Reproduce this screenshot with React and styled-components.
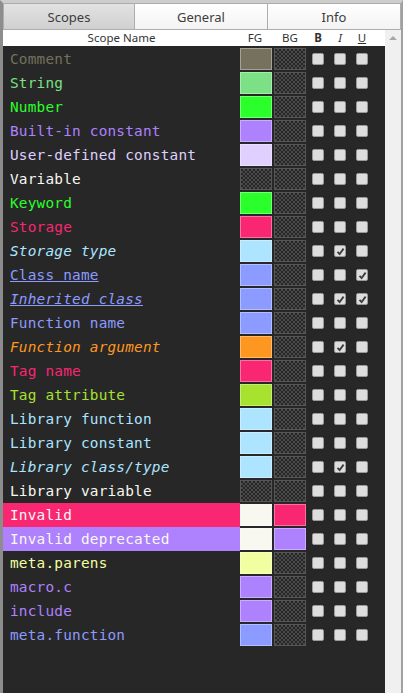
import React from 'react';
import styled, { createGlobalStyle } from 'styled-components';

const GlobalStyle = createGlobalStyle`
  html, body { margin: 0; padding: 0; background: #f0f0f0; }
  body { font-family: "Noto Sans", "Open Sans", sans-serif; }
`;

const Window = styled.div`
  width: 403px;
  height: 693px;
  box-sizing: border-box;
  border-top: 3px solid #cdcdcd;
  border-left: 3px solid #8d8d8d;
  border-right: 2px solid #a0a0a0;
  display: flex;
  flex-direction: column;
  background: #f0f0f0;
  overflow: hidden;
`;

const TabBar = styled.div`
  display: grid;
  grid-template-columns: 132px 133px 133px;
  height: 27px;
  flex-shrink: 0;
`;

const Tab = styled.div`
  display: flex;
  align-items: center;
  justify-content: center;
  font-size: 13px;
  color: #3c3c3c;
  border: 1px solid #adadad;
  border-left: ${(p) => (p.$first ? '1px solid #adadad' : 'none')};
  background: ${(p) =>
    p.$active
      ? 'linear-gradient(#e2e2e2, #d0d0d0)'
      : 'linear-gradient(#ffffff, #f3f3f3)'};
`;

const Body = styled.div`
  flex: 1;
  display: flex;
  min-height: 0;
`;

const Main = styled.div`
  width: 382px;
  display: flex;
  flex-direction: column;
`;

const Columns = styled.div`
  display: grid;
  grid-template-columns: 237px 34px 32px 22px 22px 22px;
  align-items: center;
`;

const HeaderRow = styled(Columns)`
  height: 16px;
  background: #ffffff;
  font-size: 11.5px;
  color: #333;
`;

const HeadCell = styled.div`
  text-align: center;
  line-height: 16px;
  font-weight: ${(p) => (p.$bold ? 700 : 400)};
  font-style: ${(p) => (p.$italic ? 'italic' : 'normal')};
  text-decoration: ${(p) => (p.$underline ? 'underline' : 'none')};
  padding-left: ${(p) => p.$padL || 0}px;
  padding-right: ${(p) => p.$padR || 0}px;
`;

const List = styled.div`
  flex: 1;
  background: #272727;
  padding-top: 1px;
`;

const Row = styled(Columns)`
  height: 24px;
`;

const Name = styled.div`
  height: 24px;
  line-height: 24px;
  padding-left: 7px;
  font-family: "DejaVu Sans Mono", "Liberation Mono", monospace;
  font-size: 14.4px;
  letter-spacing: 0.2px;
  white-space: nowrap;
  color: ${(p) => p.$color};
  background: ${(p) => p.$bg || 'transparent'};
  font-style: ${(p) => (p.$italic ? 'italic' : 'normal')};
  text-decoration: ${(p) => (p.$underline ? 'underline' : 'none')};
`;

const Swatch = styled.div`
  width: 32px;
  height: 22px;
  box-sizing: border-box;
  background: ${(p) => p.$color};
  box-shadow: inset 0 0 0 1px rgba(255, 255, 255, 0.35);
`;

const Empty = styled.div`
  width: 32px;
  height: 22px;
  box-sizing: border-box;
  border: 1px solid #565656;
  background: repeating-conic-gradient(#4a4a4a 0 25%, #262626 0 50%) 0 0 / 4px 4px;
`;

const Check = styled.div`
  width: 12px;
  height: 12px;
  margin-left: 6px;
  box-sizing: border-box;
  border: 1px solid #9a9a9a;
  border-radius: 2px;
  background: #dedede;
  display: flex;
  align-items: center;
  justify-content: center;
`;

const Scrollbar = styled.div`
  flex: 1;
  background: #f0f0f0;
  display: flex;
  justify-content: center;
  padding-top: 6px;
`;

const Arrow = styled.div`
  width: 0;
  height: 0;
  border-left: 4px solid transparent;
  border-right: 4px solid transparent;
  border-bottom: 4px solid #a6a6a6;
`;

const Tick = () => (
  <svg width="9" height="9" viewBox="0 0 9 9">
    <path d="M1.5 4.8 L3.6 7 L7.6 1.6" fill="none" stroke="#3a3a3a" strokeWidth="1.8" />
  </svg>
);

const scopes = [
  { name: 'Comment', color: '#75715e', fg: '#75715e' },
  { name: 'String', color: '#7be184', fg: '#7be184' },
  { name: 'Number', color: '#2bff2b', fg: '#2bff2b' },
  { name: 'Built-in constant', color: '#ae81ff', fg: '#ae81ff' },
  { name: 'User-defined constant', color: '#dfd0ff', fg: '#dfd0ff' },
  { name: 'Variable', color: '#f8f8f2' },
  { name: 'Keyword', color: '#2bff2b', fg: '#2bff2b' },
  { name: 'Storage', color: '#f92672', fg: '#f92672' },
  { name: 'Storage type', color: '#ade4ff', fg: '#ade4ff', i: true },
  { name: 'Class name', color: '#8b9bff', fg: '#8b9bff', u: true },
  { name: 'Inherited class', color: '#8b9bff', fg: '#8b9bff', i: true, u: true },
  { name: 'Function name', color: '#8b9bff', fg: '#8b9bff' },
  { name: 'Function argument', color: '#fd971f', fg: '#fd971f', i: true },
  { name: 'Tag name', color: '#f92672', fg: '#f92672' },
  { name: 'Tag attribute', color: '#a6e22e', fg: '#a6e22e' },
  { name: 'Library function', color: '#ade4ff', fg: '#ade4ff' },
  { name: 'Library constant', color: '#ade4ff', fg: '#ade4ff' },
  { name: 'Library class/type', color: '#ade4ff', fg: '#ade4ff', i: true },
  { name: 'Library variable', color: '#f8f8f2' },
  { name: 'Invalid', color: '#f8f8f0', fg: '#f8f8f0', bg: '#f92672' },
  { name: 'Invalid deprecated', color: '#f8f8f0', fg: '#f8f8f0', bg: '#ae81ff' },
  { name: 'meta.parens', color: '#f2ffa0', fg: '#f2ffa0' },
  { name: 'macro.c', color: '#ae81ff', fg: '#ae81ff' },
  { name: 'include', color: '#ae81ff', fg: '#ae81ff' },
  { name: 'meta.function', color: '#8b9bff', fg: '#8b9bff' },
];

const App = () => {
  return (
    <>
      <GlobalStyle />
      <Window>
        <TabBar>
          <Tab $first $active>Scopes</Tab>
          <Tab>General</Tab>
          <Tab>Info</Tab>
        </TabBar>
        <Body>
          <Main>
            <HeaderRow>
              <HeadCell>Scope Name</HeadCell>
              <HeadCell $padR={4}>FG</HeadCell>
              <HeadCell>BG</HeadCell>
              <HeadCell $bold $padL={2}>B</HeadCell>
              <HeadCell $italic $padL={2}>I</HeadCell>
              <HeadCell $underline $padL={2}>U</HeadCell>
            </HeaderRow>
            <List>
              {scopes.map((s) => (
                <Row key={s.name}>
                  <Name
                    $color={s.color}
                    $bg={s.bg}
                    $italic={s.i}
                    $underline={s.u}
                  >
                    {s.name}
                  </Name>
                  {s.fg ? <Swatch $color={s.fg} /> : <Empty />}
                  {s.bg ? <Swatch $color={s.bg} /> : <Empty />}
                  <Check />
                  <Check>{s.i && <Tick />}</Check>
                  <Check>{s.u && <Tick />}</Check>
                </Row>
              ))}
            </List>
          </Main>
          <Scrollbar>
            <Arrow />
          </Scrollbar>
        </Body>
      </Window>
    </>
  );
};

export default App;
